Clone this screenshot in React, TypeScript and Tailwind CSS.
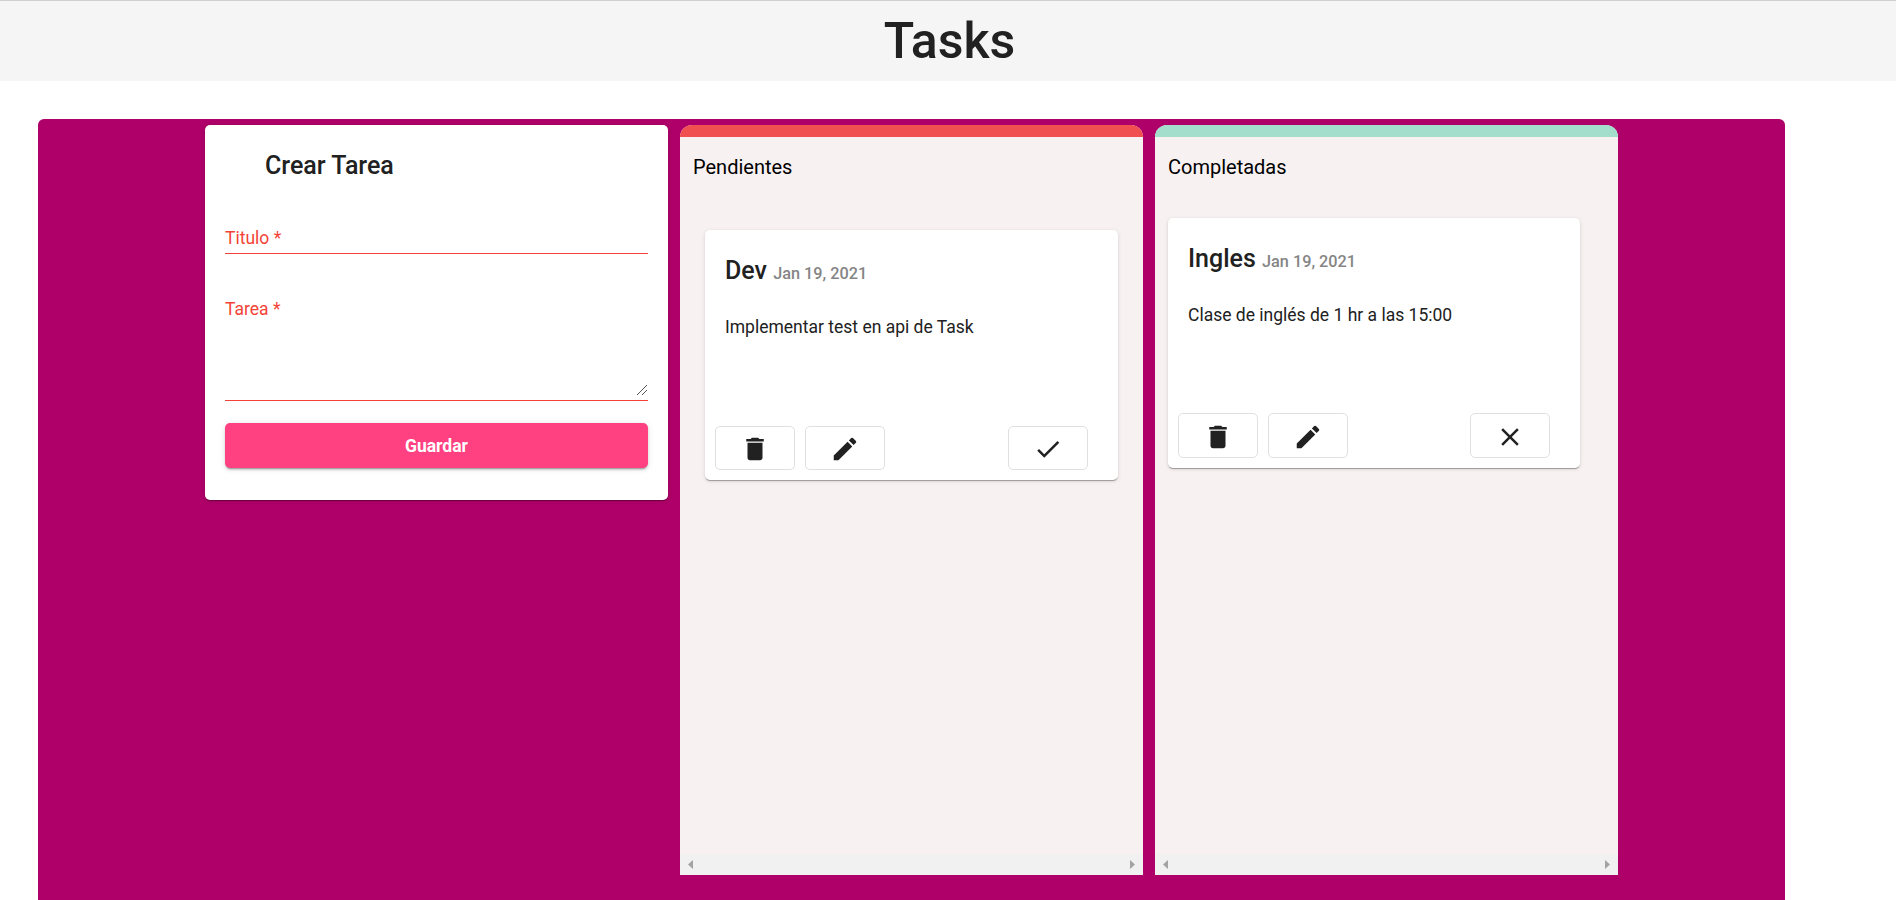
import type { ReactNode } from "react";
import { MdCheck, MdClose, MdDelete, MdEdit } from "react-icons/md";

function IconButton({ label, children }: { label: string; children: ReactNode }) {
  return (
    <button
      aria-label={label}
      className="flex h-full w-20 items-center justify-center rounded-[5px] border border-[#e0e0e0] bg-white pt-0.5 text-[30px] text-[#212121]"
    >
      {children}
    </button>
  );
}

type TaskProps = {
  title: string;
  date: string;
  text: string;
  completed?: boolean;
};

function TaskCard({ title, date, text, completed }: TaskProps) {
  return (
    <article
      className={`flex h-[250px] flex-col rounded-[5px] bg-white shadow-[0_2px_1px_-1px_rgba(0,0,0,0.2),0_1px_1px_0_rgba(0,0,0,0.14),0_1px_4px_0_rgba(0,0,0,0.12)] ${
        completed ? "mt-[23px] mr-[38px] ml-[13px]" : "mt-[35px] mr-[25px] ml-[25px]"
      }`}
    >
      <h3 className="px-5 pt-[21px] text-[25px] leading-10 font-medium text-[#212121]">
        {title} <small className="text-[16.25px] text-[#858585]">{date}</small>
      </h3>
      <p className="mt-[19px] px-5 text-[17.5px] leading-[28px] text-[#212121]">{text}</p>
      <div className={`mt-auto mb-2.5 flex gap-2.5 pr-[30px] pl-2.5 ${completed ? "h-[45px]" : "h-11"}`}>
        <IconButton label="Eliminar">
          <MdDelete />
        </IconButton>
        <IconButton label="Editar">
          <MdEdit />
        </IconButton>
        <div className="ml-auto">
          <IconButton label={completed ? "Reabrir" : "Completar"}>
            {completed ? <MdClose /> : <MdCheck />}
          </IconButton>
        </div>
      </div>
    </article>
  );
}

function Column({ title, bar, children }: { title: string; bar: string; children: ReactNode }) {
  return (
    <section className="flex h-[750px] w-[463px] flex-col overflow-hidden rounded-t-xl bg-[#f7f1f1]">
      <div className={`h-3 shrink-0 ${bar}`} />
      <h2 className="mt-[15px] pl-[13px] text-xl leading-[30px] text-black">{title}</h2>
      <div className="mt-[13px] grow">{children}</div>
      <div className="flex h-[21px] items-center justify-between bg-[#f1f1f1] px-2">
        <svg width="5" height="9" viewBox="0 0 5 9" fill="#a3a3a3">
          <path d="M5 0v9L0 4.5z" />
        </svg>
        <svg width="5" height="9" viewBox="0 0 5 9" fill="#a3a3a3">
          <path d="M0 0v9l5-4.5z" />
        </svg>
      </div>
    </section>
  );
}

function TaskForm() {
  return (
    <form className="flex h-[375px] w-[463px] flex-col rounded-[5px] bg-white px-5 pt-[21px] shadow-[0_2px_1px_-1px_rgba(0,0,0,0.2),0_1px_1px_0_rgba(0,0,0,0.14),0_1px_4px_0_rgba(0,0,0,0.12)]">
      <h2 className="pl-10 text-[25px] leading-10 font-medium text-[#212121]">Crear Tarea</h2>
      <div className="mt-[39px] flex h-[29px] items-start border-b border-[#f44336] text-[17.5px] leading-5 text-[#f44336]">
        <span className="mt-[3px]">Titulo *</span>
      </div>
      <div className="mt-[42px] flex h-[105px] items-start justify-between border-b border-[#f44336] text-[17.5px] leading-5 text-[#f44336]">
        <span className="mt-[3px]">Tarea *</span>
        <svg className="mr-px mb-[5px] self-end" width="10" height="10" viewBox="0 0 10 10" stroke="#555" strokeWidth="1">
          <path d="M0 10 10 0M5 10l5-5" />
        </svg>
      </div>
      <button
        type="button"
        className="mt-[22px] h-[45px] rounded-[5px] bg-[#ff4081] pt-0.5 text-[17.5px] font-bold text-white shadow-[0_3px_1px_-2px_rgba(0,0,0,0.2),0_2px_2px_0_rgba(0,0,0,0.14),0_1px_6px_0_rgba(0,0,0,0.12)]"
      >
        Guardar
      </button>
    </form>
  );
}

export default function App() {
  return (
    <div className="flex h-[900px] flex-col overflow-hidden bg-white font-['Roboto',sans-serif]">
      <header className="flex h-[81px] shrink-0 items-center justify-center border-t border-[#d0d0d0] bg-[#f5f5f5] pl-[3px]">
        <h1 className="text-[50px] leading-[80px] font-medium text-[#212121]">Tasks</h1>
      </header>
      <main className="mt-[38px] ml-[38px] flex w-[1747px] grow items-start justify-center gap-3 rounded-t-[6px] bg-[#ae0068] pt-1.5">
        <TaskForm />
        <Column title="Pendientes" bar="bg-[#f05050]">
          <TaskCard title="Dev" date="Jan 19, 2021" text="Implementar test en api de Task" />
        </Column>
        <Column title="Completadas" bar="bg-[#a3decd]">
          <TaskCard title="Ingles" date="Jan 19, 2021" text="Clase de inglés de 1 hr a las 15:00" completed />
        </Column>
      </main>
    </div>
  );
}
